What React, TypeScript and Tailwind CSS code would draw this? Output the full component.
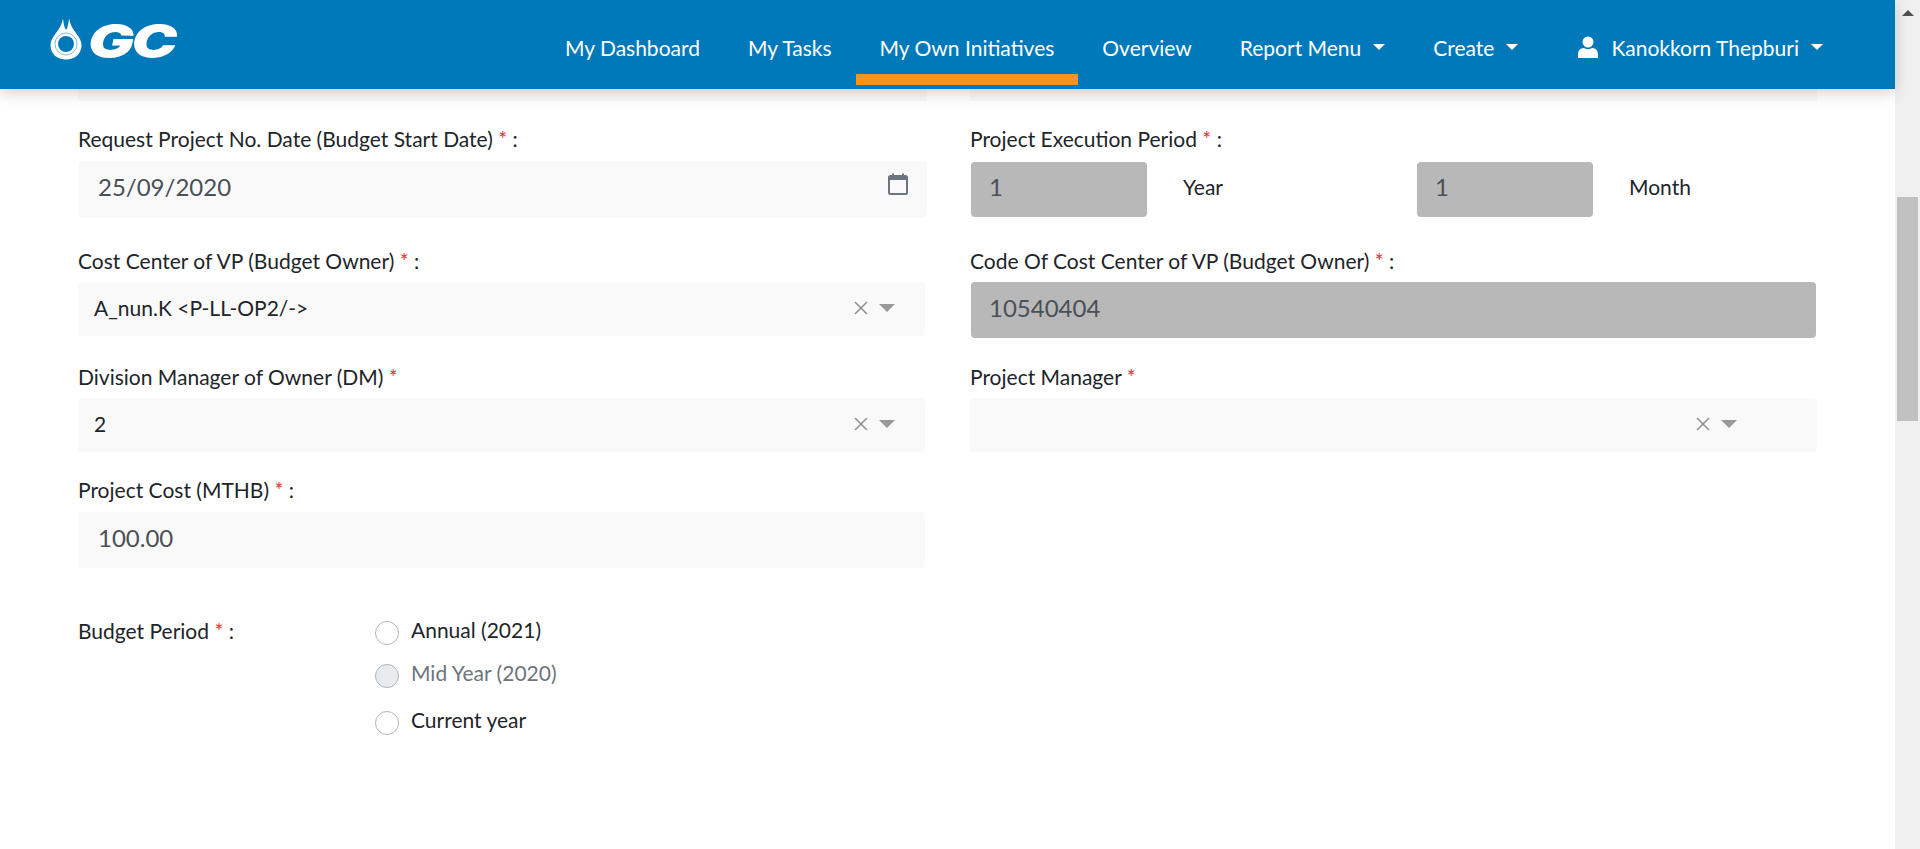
import React from 'react';

const NavItem = ({ label, active, caret }: { label: string; active?: boolean; caret?: boolean }) => (
  <div className={`h-full px-6 pt-[6px] flex items-center relative text-white text-[21px] ${active ? 'after:absolute after:left-0 after:right-0 after:bottom-[4px] after:h-[11px] after:bg-[#f7941d]' : ''}`}>
    <span>{label}</span>
    {caret && <span className="ml-3 -mt-[2px] w-0 h-0 border-x-[6px] border-x-transparent border-t-[6px] border-t-white" />}
  </div>
);

const Req = () => <span className="text-[#e3342f]"> *</span>;

const Label = ({ text, colon = true, className = '' }: { text: string; colon?: boolean; className?: string }) => (
  <div className={`text-[21px] leading-[24px] text-[#212529] ${className}`}>
    {text}<Req />{colon && ' :'}
  </div>
);

const SelectBox = ({ value, wide }: { value?: string; wide?: boolean }) => (
  <div className={`h-[54px] bg-[#f9f9f9] rounded-[4px] flex items-center pl-4 pb-[2px] text-[21px] text-[#212529] ${wide ? 'pr-[80px]' : 'pr-[30px]'}`}>
    <span className="flex-1">{value}</span>
    <svg width="14" height="14" viewBox="0 0 14 14" className="mr-[11px]"><path d="M1 1 L13 13 M13 1 L1 13" stroke="#8f8f8f" strokeWidth="1.5" /></svg>
    <span className="w-0 h-0 border-x-[8px] border-x-transparent border-t-[8px] border-t-[#999]" />
  </div>
);

const TextBox = ({ value, disabled, short }: { value: string; disabled?: boolean; short?: boolean }) => (
  <div className={`rounded-[4px] flex items-center text-[24px] text-[#495057] ${disabled ? 'bg-[#b8b8b8] mx-px pl-[18px]' : 'bg-[#f9f9f9] pl-[20px]'} ${short ? 'h-[55px] pb-[5px]' : 'h-[56px] pb-[4px]'}`}>
    {value}
  </div>
);

const Radio = ({ label, disabled, className = '' }: { label: string; disabled?: boolean; className?: string }) => (
  <div className={`flex items-start ${className}`}>
    <span className={`w-6 h-6 rounded-full border border-[#adb5bd] ${disabled ? 'bg-[#e9ecef]' : 'bg-white'}`} />
    <span className={`ml-[12px] -mt-px text-[21px] leading-[20px] ${disabled ? 'text-[#6c757d]' : 'text-[#212529]'}`}>{label}</span>
  </div>
);

const Logo = () => (
  <div className="flex items-center mb-[12px]">
    <svg width="32" height="42" viewBox="0 0 32 42">
      <path d="M16 41.5 C7 41.5 0.5 36 0.5 27 C0.5 18 11 13 13 0.5 C13.5 6 14.5 10 16 12 C17.5 10 18.5 6 19 0.5 C21 13 31.5 18 31.5 27 C31.5 36 25 41.5 16 41.5 Z" fill="#fff" />
      <circle cx="16" cy="26" r="11" fill="none" stroke="#7fbcdc" strokeWidth="1" />
      <circle cx="16" cy="26" r="8" fill="#0079bb" />
    </svg>
    <span className="ml-[6px] mt-[4px] text-white italic font-black text-[47px] leading-none tracking-[-2px] font-['Inter',sans-serif] origin-left [transform:scaleX(1.3)]">GC</span>
  </div>
);

export default function App() {
  return (
    <div className="h-[849px] flex overflow-hidden bg-white font-['Lato',sans-serif]">
      <div className="flex-1 min-w-0 flex flex-col">
        <header className="h-[89px] shrink-0 bg-[#0079bb] flex items-center justify-between pl-[50px] pr-[48px] relative z-10 shadow-[0_4px_14px_rgba(0,0,0,0.18)]">
          <Logo />
          <nav className="h-full flex items-center">
            <NavItem label="My Dashboard" />
            <NavItem label="My Tasks" />
            <NavItem label="My Own Initiatives" active />
            <NavItem label="Overview" />
            <NavItem label="Report Menu" caret />
            <NavItem label="Create" caret />
            <div className="h-full pl-[36px] pr-6 pt-[6px] flex items-center text-white text-[21px]">
              <svg width="20" height="22" viewBox="0 0 20 22" className="mr-[13px] -mt-[2px]" fill="#fff">
                <circle cx="10" cy="6" r="5.5" />
                <path d="M0 22 V18 C0 14 3 12 6 12 C8 13.4 12 13.4 14 12 C17 12 20 14 20 18 V22 Z" />
              </svg>
              <span>Kanokkorn Thepburi</span>
              <span className="ml-3 -mt-[2px] w-0 h-0 border-x-[6px] border-x-transparent border-t-[6px] border-t-white" />
            </div>
          </nav>
        </header>

        <main className="flex-1 px-[78px]">
          <div className="grid grid-cols-[849px_847px] gap-x-[43px]">
            <div className="h-[12px] bg-[#f9f9f9]" />
            <div className="h-[12px] bg-[#f9f9f9]" />
          </div>

          <div className="grid grid-cols-[849px_847px] gap-x-[43px] mt-[26px]">
            <div>
              <Label text="Request Project No. Date (Budget Start Date)" />
              <div className="mt-[10px] h-[57px] bg-[#f9f9f9] rounded-[4px] flex items-center justify-between pl-[20px] pr-[19px] pb-[6px] text-[24px] text-[#495057]">
                25/09/2020
                <svg width="20" height="22" viewBox="0 0 20 22" className="-mt-[5px]" fill="none">
                  <path d="M5 0.5 V4 M15 0.5 V4" stroke="#6c757d" strokeWidth="2" />
                  <rect x="1" y="3" width="18" height="18" rx="1.5" stroke="#6c757d" strokeWidth="2" />
                  <path d="M1 5.5 H19" stroke="#6c757d" strokeWidth="3" />
                </svg>
              </div>
            </div>
            <div>
              <Label text="Project Execution Period" />
              <div className="mt-[11px] flex">
                <div className="w-[446px] flex items-center">
                  <div className="w-[178px]"><TextBox value="1" disabled short /></div>
                  <span className="ml-[35px] pb-[5px] text-[21px] text-[#212529]">Year</span>
                </div>
                <div className="flex items-center">
                  <div className="w-[178px]"><TextBox value="1" disabled short /></div>
                  <span className="ml-[35px] pb-[5px] text-[21px] text-[#212529]">Month</span>
                </div>
              </div>
            </div>

            <div className="mt-[31px] pr-[2px]">
              <Label text="Cost Center of VP (Budget Owner)" />
              <div className="mt-[9px]"><SelectBox value="A_nun.K <P-LL-OP2/->" /></div>
            </div>
            <div className="mt-[31px]">
              <Label text="Code Of Cost Center of VP (Budget Owner)" />
              <div className="mt-[9px]"><TextBox value="10540404" disabled /></div>
            </div>

            <div className="mt-[27px] pr-[2px]">
              <Label text="Division Manager of Owner (DM)" colon={false} />
              <div className="mt-[9px]"><SelectBox value="2" /></div>
            </div>
            <div className="mt-[27px]">
              <Label text="Project Manager" colon={false} />
              <div className="mt-[9px]"><SelectBox wide /></div>
            </div>

            <div className="mt-[26px] pr-[2px]">
              <Label text="Project Cost (MTHB)" />
              <div className="mt-[10px]"><TextBox value="100.00" /></div>
            </div>
            <div />
          </div>

          <div className="mt-[53px] flex">
            <Label text="Budget Period" className="w-[297px] -mt-[2px]" />
            <div>
              <Radio label="Annual (2021)" />
              <Radio label="Mid Year (2020)" disabled className="mt-[19px]" />
              <Radio label="Current year" className="mt-[23px]" />
            </div>
          </div>
        </main>
      </div>

      <div className="w-[25px] shrink-0 bg-[#f0f0f0] flex flex-col items-center">
        <span className="mt-[10px] w-0 h-0 border-x-[6px] border-x-transparent border-b-[6px] border-b-[#505050]" />
        <div className="mt-[181px] w-[21px] h-[224px] bg-[#c0c0c0]" />
      </div>
    </div>
  );
}
